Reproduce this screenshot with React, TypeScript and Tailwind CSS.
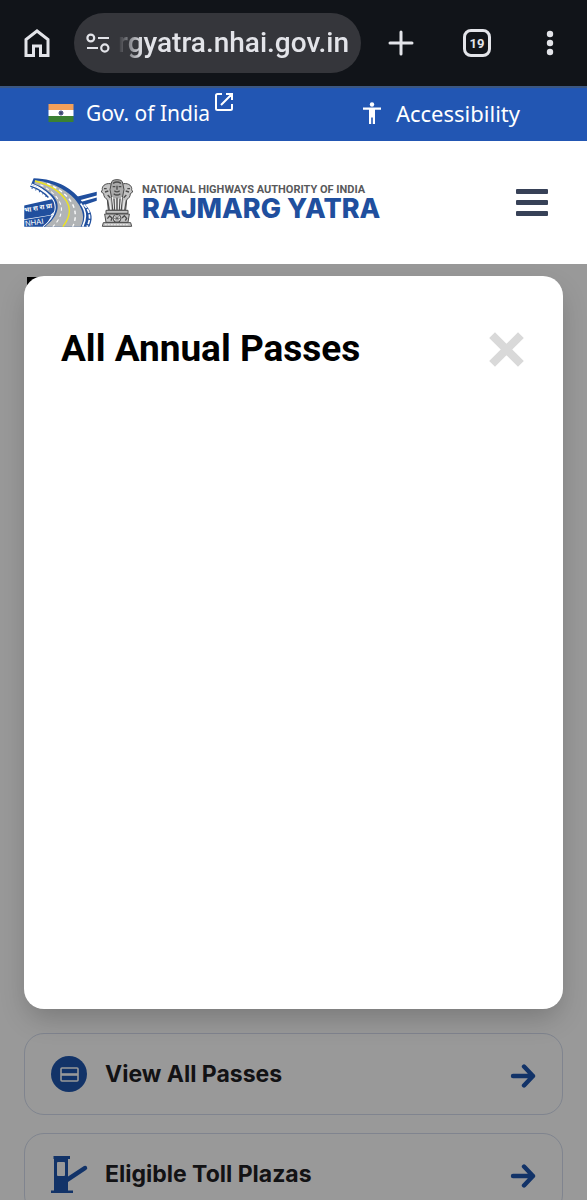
import { useState, type ReactNode } from 'react';

export default function App() {
  const [open, setOpen] = useState(true);

  return (
    <div className="h-screen flex flex-col overflow-hidden bg-white font-['Noto_Sans',sans-serif]">
      <BrowserBar />
      <GovBar />
      <SiteHeader />

      <main className="relative flex-1 overflow-hidden px-6 pt-3">
        <div className="h-[733px] ml-[3px] pt-px">
          <div className="w-40 h-40 bg-black" />
        </div>

        <div className="mt-6 flex flex-col gap-[18px]">
          <PassLink label="View All Passes" icon={<PassIcon />} />
          <PassLink label="Eligible Toll Plazas" icon={<TollIcon />} />
        </div>

        {open && (
          <div className="absolute inset-0 bg-black/40 px-6 pt-3">
            <div
              role="dialog"
              aria-labelledby="passes-title"
              className="h-[733px] rounded-[20px] bg-white shadow-[0_12px_28px_-4px_rgba(0,0,0,0.22)] px-[37px] pt-12"
            >
              <div className="flex items-center justify-between">
                <h2
                  id="passes-title"
                  className="text-[37px] leading-[50px] font-bold text-black font-['Roboto',sans-serif]"
                >
                  All Annual Passes
                </h2>
                <button type="button" aria-label="Close" onClick={() => setOpen(false)} className="p-[2px]">
                  <svg viewBox="0 0 34 34" className="size-[35px]">
                    <path d="M3 3 31 31M31 3 3 31" stroke="#d9d9d9" strokeWidth="8" />
                  </svg>
                </button>
              </div>
            </div>
          </div>
        )}
      </main>
    </div>
  );
}

function BrowserBar() {
  return (
    <div className="h-[86px] shrink-0 flex items-center pl-6 pr-6 bg-[#111419] text-[#e3e4e9]">
      <button type="button" aria-label="Home">
        <svg viewBox="0 0 26 28" className="w-[26px] h-7" fill="none" stroke="currentColor" strokeWidth="3">
          <path d="M2 26.5V10.5L13 2l11 8.500v16h-7.500V17h-7v9.500z" />
        </svg>
      </button>

      <div className="ml-6 flex-1 min-w-0 h-[60px] flex items-center pl-3 pr-3 rounded-full bg-[#35363b]">
        <svg viewBox="0 0 24 20" className="w-6 h-5 shrink-0" fill="none" stroke="currentColor" strokeWidth="2.200">
          <circle cx="4.800" cy="5" r="3.400" />
          <path d="M12 5h11M1 15h11" />
          <circle cx="18.800" cy="15" r="3.600" />
        </svg>
        <input
          type="text"
          aria-label="Address"
          defaultValue="rgyatra.nhai.gov.in"
          className="ml-2 flex-1 min-w-0 bg-transparent outline-none text-right text-[28px] leading-10 font-medium font-['Roboto',sans-serif] [mask-image:linear-gradient(to_right,transparent,black_24px)]"
        />
      </div>

      <button type="button" aria-label="New tab" className="ml-[27px]">
        <svg viewBox="0 0 26 26" className="size-[26px]" stroke="currentColor" strokeWidth="3" strokeLinecap="round">
          <path d="M13 2v22M2 13h22" />
        </svg>
      </button>
      <button
        type="button"
        aria-label="Tabs"
        className="ml-[49px] size-7 flex items-center justify-center border-[3px] border-current rounded-[8px] text-[13px] leading-none font-bold font-['Roboto',sans-serif]"
      >
        19
      </button>
      <button type="button" aria-label="Menu" className="ml-11">
        <svg viewBox="0 0 28 28" className="size-7" fill="currentColor">
          <circle cx="15" cy="5" r="3.200" />
          <circle cx="15" cy="14" r="3.200" />
          <circle cx="15" cy="23" r="3.200" />
        </svg>
      </button>
    </div>
  );
}

function GovBar() {
  return (
    <div className="h-[55px] shrink-0 flex items-center justify-between border-t-2 border-[#3c5781] pl-12 pr-[67px] pb-1 bg-[#2256b3] text-white leading-[30px]">
      <a href="#india" className="flex items-center text-[21px]">
        <svg viewBox="0 0 25 18" className="w-[26px] h-[18px]">
          <path fill="#f2a05b" d="M0 0h25v6H0z" />
          <path fill="#fff" d="M0 6h25v6H0z" />
          <path fill="#3b8132" d="M0 12h25v6H0z" />
          <circle cx="12.500" cy="9" r="2" fill="#8b93b8" stroke="#333d70" />
          <circle cx="12.500" cy="9" r="1" fill="#252c55" />
        </svg>
        <span className="ml-3">Gov. of India</span>
        <svg
          viewBox="0 0 20 20"
          className="ml-1 mb-[22px] size-5"
          fill="none"
          stroke="currentColor"
          strokeWidth="2"
        >
          <path d="M8 2H3.500Q2 2 2 3.500v13Q2 18 3.500 18h13q1.500 0 1.500-1.500V12M12 2h6v6M18 2 7 13" />
        </svg>
      </a>
      <a href="#accessibility" className="flex items-center gap-[14px] text-[22px]">
        <svg viewBox="0 0 20 22" className="w-5 h-[22px]" fill="currentColor">
          <circle cx="10" cy="2.500" r="2.200" />
          <path d="M1 5.500h18v2.300h-6V22h-2.200v-6.500H9.200V22H7V7.800H1z" />
        </svg>
        <span>Accessibility</span>
      </a>
    </div>
  );
}

function SiteHeader() {
  return (
    <header className="h-[123px] shrink-0 flex items-center justify-between pl-6 pr-[39px] bg-white">
      <a href="#home" className="flex items-center">
        <HighwayLogo />
        <Emblem />
        <span className="ml-[9px] flex flex-col whitespace-nowrap">
          <span className="text-[11px] leading-3 font-bold text-[#58595b] font-['Roboto',sans-serif]">
            NATIONAL HIGHWAYS AUTHORITY OF INDIA
          </span>
          <span className="text-[27px] leading-[26px] font-extrabold text-[#204f9e] font-['Inter',sans-serif]">
            RAJMARG YATRA
          </span>
        </span>
      </a>
      <button type="button" aria-label="Open menu" className="flex flex-col gap-[6px]">
        <span className="w-8 h-[5px] rounded-[1px] bg-[#374157]" />
        <span className="w-8 h-[5px] rounded-[1px] bg-[#374157]" />
        <span className="w-8 h-[5px] rounded-[1px] bg-[#374157]" />
      </button>
    </header>
  );
}

function PassLink({ label, icon }: { label: string; icon: ReactNode }) {
  return (
    <a
      href="#passes"
      className="h-[82px] flex items-center rounded-[20px] border border-[#d5ddee] bg-white px-[26px]"
    >
      {icon}
      <span className="ml-[18px] flex-1 text-[23px] leading-8 font-bold text-[#1f2024] font-['Inter',sans-serif]">
        {label}
      </span>
      <svg
        viewBox="0 0 26 26"
        className="mt-1 size-[26px]"
        fill="none"
        stroke="#1f56ae"
        strokeWidth="4.400"
        strokeLinecap="round"
        strokeLinejoin="round"
      >
        <path d="M3 13h20M14 3.500 23 13l-9 9.500" />
      </svg>
    </a>
  );
}

function PassIcon() {
  return (
    <svg viewBox="0 0 36 36" className="size-9">
      <circle cx="18" cy="18" r="18" fill="#1f56ae" />
      <rect x="10" y="12" width="17" height="13" rx="1" fill="none" stroke="#fff" strokeWidth="1.600" />
      <path d="M10 18.500h17" stroke="#fff" strokeWidth="2.600" />
    </svg>
  );
}

function TollIcon() {
  return (
    <svg viewBox="0 0 36 36" className="size-9 overflow-visible" fill="#1f56ae">
      <path d="M2.500 0H19v3h-2v17.500L33 10q2-1 3 1t-1 3L17 26v8.500h5V37H0v-2.500h3V3h-.500z" />
      <rect x="6" y="6" width="8" height="14" rx="1" fill="#fff" />
    </svg>
  );
}

function HighwayLogo() {
  return (
    <svg viewBox="30 40 216 146" className="w-[73px] h-[49px]">
      {/* crossing road, right side */}
      <path fill="#204f9e" d="M180 97 246 81v11l-56 16zM195 112l51-14v10l-44 15z" />
      {/* sign plates, left side */}
      <path fill="#204f9e" d="M30 122 112 103 136 125 108 150 30 163z" />
      <path fill="#204f9e" d="M30 165 112 151 92 185H30z" />
      {/* carriageway */}
      <path fill="#204f9e" d="M58 41c72 2 118 32 146 72 22 18 36 40 20 72H88c38-34 42-66 16-94C90 76 75 66 50 60z" />
      <path fill="#b1b4b6" d="M62 47c60 6 106 36 128 68 14 20 22 44 8 70H92c42-32 48-68 22-94-16-16-34-28-54-34z" />
      <path fill="none" stroke="#fff" strokeWidth="3" d="M52 58c28 10 42 22 56 36 24 26 18 60-22 91" />
      <path fill="none" stroke="#204f9e" strokeWidth="4" d="M48 64c24 8 42 20 54 34" />
      <path fill="none" stroke="#204f9e" strokeWidth="4" strokeDasharray="3 9" d="M52 70c22 8 38 18 48 30" />
      <path fill="none" stroke="#eee51c" strokeWidth="4" d="M62 49c44 10 76 32 94 60 16 26 8 52-11 76" />
      <path fill="none" stroke="#fff" strokeWidth="3" strokeDasharray="10 9" d="M78 60c34 16 58 44 62 64 4 24-8 44-25 61" />
      <path fill="none" stroke="#fff" strokeWidth="4" strokeDasharray="11 9" d="M98 56c42 18 74 46 82 78 4 18 2 36-6 51" />
      <path fill="none" stroke="#fff" strokeWidth="5" d="M198 116c16 20 18 44 6 69" />
      <path fill="none" stroke="#fff" strokeWidth="5" strokeDasharray="13 4" d="M207 119c20 18 22 44 10 66" />
      <text
        x="31"
        y="143"
        fill="#fff"
        fontSize="20"
        fontWeight="700"
        transform="rotate(-10 31 143)"
        className="font-['Noto_Sans',sans-serif]"
      >
        भा रा रा प्रा
      </text>
      <text
        x="34"
        y="184"
        fill="#fff"
        fontSize="23"
        transform="rotate(-8 34 184)"
        className="font-['Liberation_Sans',sans-serif]"
      >
        NHAI
      </text>
    </svg>
  );
}

function Emblem() {
  return (
    <svg viewBox="0 0 96 144" className="ml-1 w-8 h-12" stroke="#4b4b4b" strokeWidth="3" fill="#c4c4c4">
      {/* side lions */}
      <path d="M28 14C12 12 2 22 4 32l-3 7 7 5c0 9 5 14 11 18l3 32h16V20z" />
      <path d="M68 14c16-2 26 8 24 18l3 7-7 5c0 9-5 14-11 18l-3 32H58V20z" />
      {/* front lion */}
      <path d="M31 12Q32 2 48 2t17 10l4 20-5 24-3 38H35l-3-38-5-24z" fill="#aaa" />
      <path d="M36 13q12-8 24 0M35 23h8M53 23h8M48 20v12M40 35q8 7 16 0M38 44q10 8 20 0" fill="none" strokeWidth="4" />
      <path d="M9 29h8M79 29h8M12 39l10-3M84 39l-10-3M20 48l8 8M76 48l-8 8" fill="none" strokeWidth="4" />
      <path d="M34 54l5 36M43 58v34M53 58v34M62 54l-5 36M26 64l3 28M70 64l-3 28" fill="none" stroke="#f3f3f3" strokeWidth="3" />
      <path d="M20 64l5 30M76 64l-5 30M39 60l2 34M57 60l-2 34M48 56v38" fill="none" strokeWidth="3" />
      {/* abacus and wheel */}
      <path d="M15 94h66v9H15zM11 105h74l-4 25H15z" />
      <circle cx="48" cy="118" r="12" fill="#e3e3e3" />
      <path d="M48 107v22M37 118h22M40 110l16 16M56 110l-16 16" strokeWidth="2" />
      <path d="M19 119l7-8 7 6-3 8M63 117l7-7 7 8-4 7" fill="none" strokeWidth="4" />
      <path d="M7 131h82l3 11H4z" />
      <path d="M12 137h72" stroke="#eee" strokeDasharray="5 4" />
    </svg>
  );
}
